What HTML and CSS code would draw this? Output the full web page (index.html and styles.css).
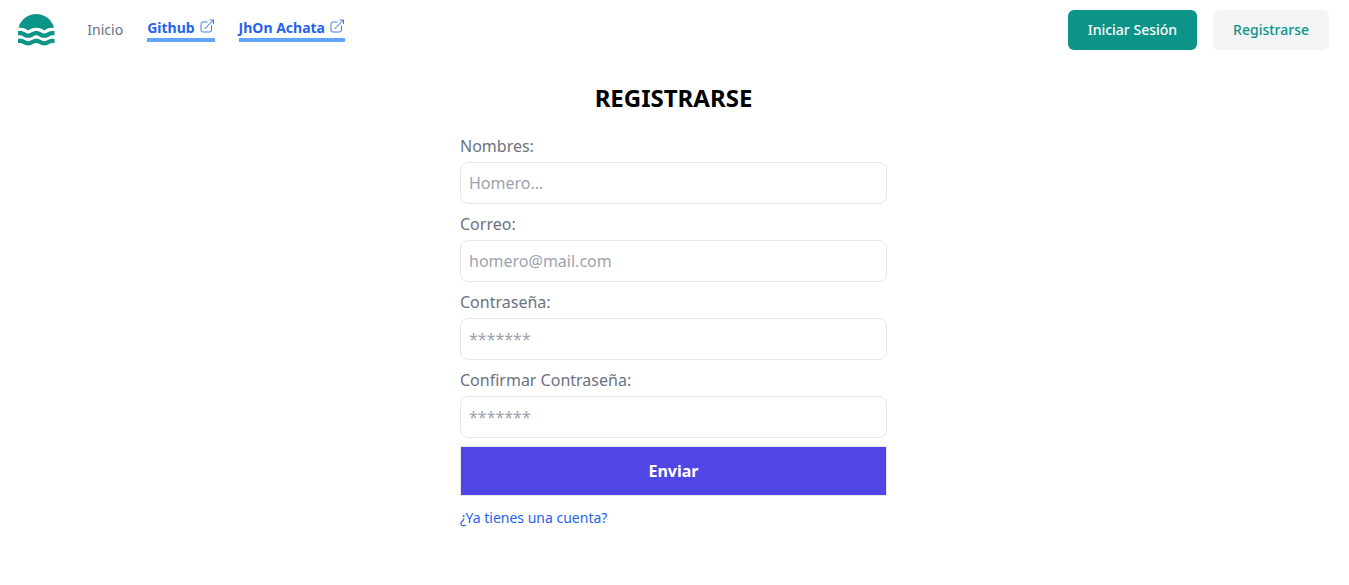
FILE: index.html
```
<!DOCTYPE html>
<html lang="es">
<head>
<meta charset="utf-8">
<meta name="viewport" content="width=device-width, initial-scale=1">
<title>Registrarse</title>
<link rel="stylesheet" href="styles.css">
</head>
<body>
<header class="header">
  <a class="logo" href="#" aria-label="Inicio">
    <svg class="logo-mark" viewBox="0 0 28 24" fill="currentColor" aria-hidden="true">
      <path d="M0.41 10.3847C1.14777 7.4194 2.85643 4.7861 5.2639 2.90424C7.6714 1.02234 10.6393 0 13.695 0C16.7507 0 19.7186 1.02234 22.1261 2.90424C24.5336 4.7861 26.2422 7.4194 26.98 10.3847H25.78C23.7557 10.3549 21.7729 10.9599 20.11 12.1147C20.014 12.1842 19.9138 12.2477 19.81 12.3047H19.67C19.5662 12.2477 19.466 12.1842 19.37 12.1147C17.6924 10.9866 15.7166 10.3841 13.695 10.3841C11.6734 10.3841 9.6976 10.9866 8.02 12.1147C7.924 12.1842 7.8238 12.2477 7.72 12.3047H7.58C7.4762 12.2477 7.376 12.1842 7.28 12.1147C5.6171 10.9599 3.6343 10.3549 1.61 10.3847H0.41Z"/>
      <path id="wave" d="M23.62 16.6547C24.236 16.175 24.9995 15.924 25.78 15.9447H27.39V12.7347H25.78C24.4052 12.7181 23.0619 13.146 21.95 13.9547C21.3243 14.416 20.5674 14.6649 19.79 14.6649C19.0126 14.6649 18.2557 14.416 17.63 13.9547C16.4899 13.1611 15.1341 12.7356 13.745 12.7356C12.3559 12.7356 11.0001 13.1611 9.86 13.9547C9.2343 14.416 8.4774 14.6649 7.7 14.6649C6.9226 14.6649 6.1657 14.416 5.54 13.9547C4.4144 13.1356 3.0518 12.7072 1.66 12.7347H0V15.9447H1.61C2.39051 15.924 3.154 16.175 3.77 16.6547C4.908 17.4489 6.2623 17.8747 7.65 17.8747C9.0377 17.8747 10.392 17.4489 11.53 16.6547C12.1468 16.1765 12.9097 15.9257 13.69 15.9447C14.4708 15.9223 15.2348 16.1735 15.85 16.6547C16.9901 17.4484 18.3459 17.8738 19.735 17.8738C21.1241 17.8738 22.4799 17.4484 23.62 16.6547Z"/>
      <use href="#wave" y="5.75"/>
    </svg>
  </a>
  <nav class="nav">
    <a class="nav-link" href="#">Inicio</a>
    <a class="nav-link nav-external" href="#">Github
      <svg class="external" viewBox="0 0 15 15" aria-hidden="true"><path class="external-box" d="M7.500 3H3Q1 3 1 5V11Q1 13 3 13H9.500Q11.500 13 11.500 11V6.500"/><path class="external-head" d="M9.500 1H13.500V5"/><path d="M4.500 10 13.500 1"/></svg>
    </a>
    <a class="nav-link nav-external" href="#">JhOn Achata
      <svg class="external" viewBox="0 0 15 15" aria-hidden="true"><path class="external-box" d="M7.500 3H3Q1 3 1 5V11Q1 13 3 13H9.500Q11.500 13 11.500 11V6.500"/><path class="external-head" d="M9.500 1H13.500V5"/><path d="M4.500 10 13.500 1"/></svg>
    </a>
  </nav>
  <div class="actions">
    <a class="button button-primary" href="#">Iniciar Sesión</a>
    <a class="button button-muted" href="#">Registrarse</a>
  </div>
</header>
<main class="main">
  <form class="form">
    <h1 class="title">REGISTRARSE</h1>
    <div class="field">
      <label for="name">Nombres:</label>
      <input class="input" id="name" type="text" placeholder="Homero...">
    </div>
    <div class="field">
      <label for="email">Correo:</label>
      <input class="input" id="email" type="email" placeholder="homero@mail.com">
    </div>
    <div class="field">
      <label for="password">Contraseña:</label>
      <input class="input" id="password" type="password" placeholder="*******">
    </div>
    <div class="field">
      <label for="confirm">Confirmar Contraseña:</label>
      <input class="input" id="confirm" type="password" placeholder="*******">
    </div>
    <button class="submit" type="submit">Enviar</button>
    <a class="login-link" href="#">¿Ya tienes una cuenta?</a>
  </form>
</main>
</body>
</html>
```
FILE: styles.css
```
* {
  box-sizing: border-box;
}

body {
  margin: 0;
  padding: 0 20px 0 18px;
  background: #fff;
  color: #000;
  font-family: "Noto Sans", sans-serif;
  font-size: 16px;
  line-height: 24px;
}

a {
  text-decoration: none;
}

.header {
  display: flex;
  align-items: center;
  padding: 10px 0;
  font-size: 14px;
  line-height: 20px;
}

.logo {
  color: #0d9488;
}

.logo-mark {
  display: block;
  height: 32px;
}

.nav {
  display: flex;
  align-items: center;
  gap: 24px;
  margin-left: 32px;
}

.nav-link {
  color: #6b7280;
}

.nav-external {
  display: flex;
  gap: 5px;
  border-bottom: 4px solid #60a5fa;
  color: #2563eb;
  font-weight: 700;
}

.external {
  width: 15px;
  height: 15px;
  margin-top: 1px;
  fill: none;
  stroke: currentColor;
  stroke-width: 1;
}

.external-box,
.external-head {
  stroke-opacity: 0.85;
}

.actions {
  display: flex;
  gap: 16px;
  margin-left: auto;
}

.button {
  padding: 10px 20px;
  border-radius: 6px;
  font-weight: 500;
}

.button-primary {
  background: #0d9488;
  color: #fff;
}

.button-muted {
  background: #f3f4f6;
  color: #0d9488;
}

.main {
  padding: 22px 0;
}

.form {
  display: flex;
  flex-direction: column;
  gap: 8px;
  max-width: 427px;
  margin: 0 auto;
}

.title {
  margin: 0 0 12px;
  font-size: 24px;
  font-weight: 700;
  line-height: 32px;
  text-align: center;
}

.field {
  display: flex;
  flex-direction: column;
  gap: 4px;
  color: #6b7280;
}

.input {
  width: 100%;
  height: 42px;
  padding: 8px;
  border: 1px solid #e5e7eb;
  border-radius: 8px;
  background: #fff;
  color: #000;
  font: inherit;
}

.input::placeholder {
  color: #9ca3af;
  opacity: 1;
}

.submit {
  padding: 12px;
  border: 1px solid #e5e7eb;
  background: #4f46e5;
  color: #fff;
  font: inherit;
  font-weight: 700;
}

.login-link {
  align-self: flex-start;
  margin-top: 4px;
  color: #2563eb;
  font-size: 14px;
  line-height: 20px;
}
```
